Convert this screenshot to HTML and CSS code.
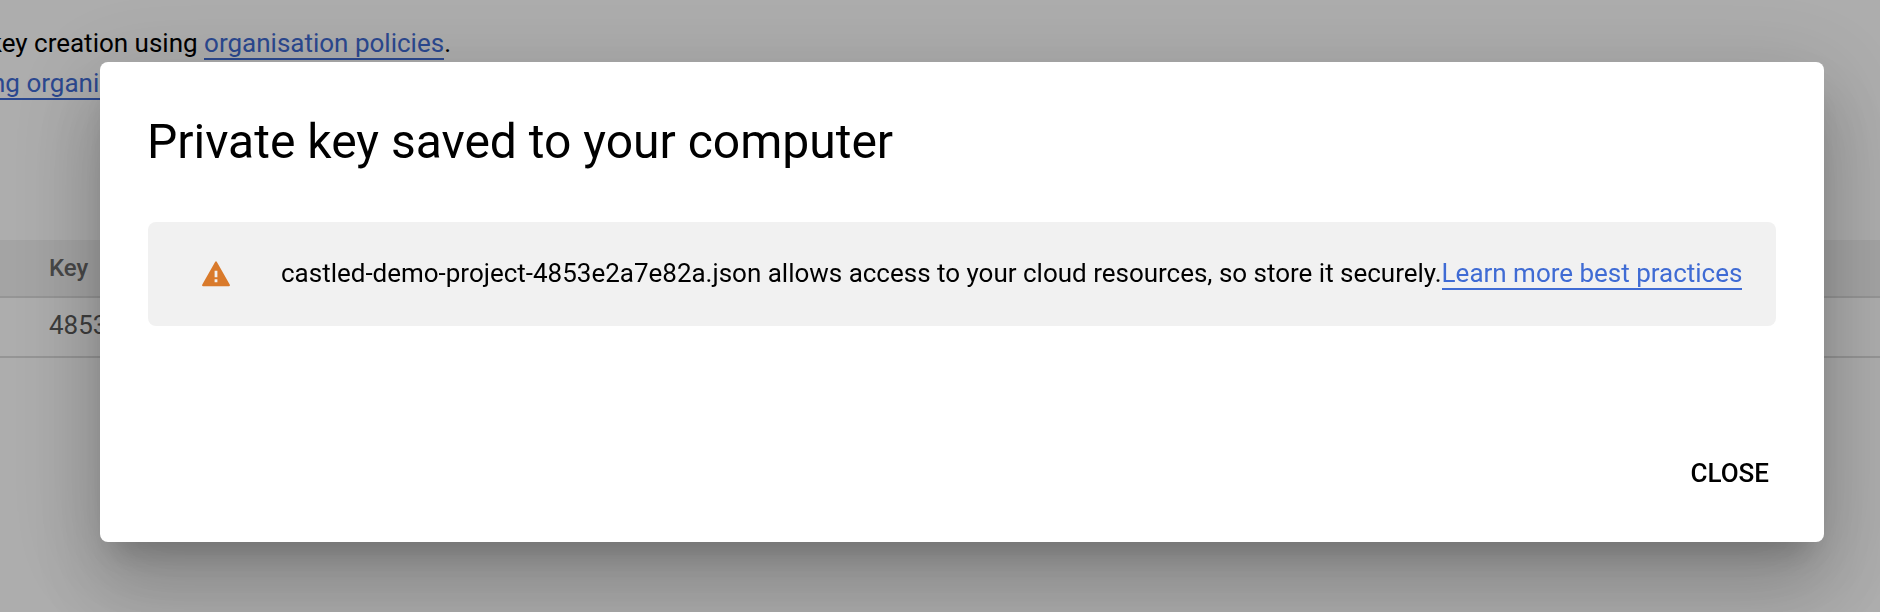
FILE: index.html
```html
<!DOCTYPE html>
<html lang="en-GB">
<head>
<meta charset="utf-8">
<title>Private key saved</title>
<link rel="stylesheet" href="styles.css">
</head>
<body>
<main class="page">
  <div class="notes">
    <p class="note note-first"><span>key creation using <a class="link">organisation policies</a>.</span></p>
    <p class="note note-second"><a class="link">ng organi</a></p>
  </div>
  <div class="table">
    <div class="row head">Key</div>
    <div class="row">4853</div>
  </div>
</main>
<div class="backdrop">
  <section class="dialog" role="dialog">
    <h1 class="title">Private key saved to your computer</h1>
    <div class="alert">
      <svg class="warn" viewBox="0 0 28 26"><path fill="#d97a2b" fill-rule="evenodd" d="M13.1.9Q14 -.5 14.9.9L27.7 23.6Q28.4 25.3 26.8 25.3H1.2Q-.4 25.3.3 23.6ZM12.6 9.7V16.2H15.4V9.7ZM12.6 18.3V21.3H15.4V18.3Z"/></svg>
      <p class="message">castled-demo-project-4853e2a7e82a.json allows access to your cloud resources, so store it securely.<a class="link">Learn more best practices</a></p>
    </div>
    <div class="actions"><button class="close">CLOSE</button></div>
  </section>
</div>
</body>
</html>
```
FILE: styles.css
```css
* { box-sizing: border-box; }
body {
  margin: 0;
  height: 612px;
  overflow: hidden;
  background: #fff;
  color: #000;
  font: 26px/40px Roboto, sans-serif;
}
p, h1 { margin: 0; }
.page { height: 612px; padding-top: 23px; }
.notes { height: 217px; overflow: hidden; }
.note { white-space: nowrap; }
.note-first { display: flex; justify-content: flex-end; width: 451px; }
.note-second { margin-left: -9px; }
.note-second .link { padding-right: 4px; }
.link { color: #3f6bd4; box-shadow: 0 2px 0 #3f6bd4; }
.row {
  height: 60px;
  padding-left: 49px;
  border-bottom: 2px solid #dcdcdc;
  color: #5a5a5a;
  line-height: 54px;
}
.head {
  height: 58px;
  background: #f2f2f2;
  color: #6a6a6a;
  font-size: 24px;
  font-weight: 500;
  line-height: 56px;
}
.backdrop {
  position: fixed;
  inset: 0;
  padding: 62px 56px 70px 100px;
  background: rgba(0, 0, 0, .32);
}
.dialog {
  display: flex;
  flex-direction: column;
  height: 480px;
  padding: 48px;
  border-radius: 8px;
  background: #fff;
  box-shadow: 0 22px 30px -14px rgba(0, 0, 0, .2), 0 48px 76px 6px rgba(0, 0, 0, .14), 0 18px 92px 16px rgba(0, 0, 0, .12);
}
.title { height: 112px; margin-left: -1px; font-size: 48px; font-weight: 400; line-height: 64px; }
.alert {
  display: flex;
  align-items: center;
  height: 104px;
  padding-left: 54px;
  border-radius: 8px;
  background: #f1f1f1;
}
.warn { flex: none; width: 28px; height: 26px; margin-right: 51px; }
.message { padding-bottom: 2px; white-space: nowrap; letter-spacing: -.01px; }
.actions { display: flex; justify-content: flex-end; margin-top: auto; padding-bottom: 1px; }
.close {
  padding: 0 7px;
  border: 0;
  background: none;
  color: #000;
  font: 500 26px/40px Roboto, sans-serif;
}
```
